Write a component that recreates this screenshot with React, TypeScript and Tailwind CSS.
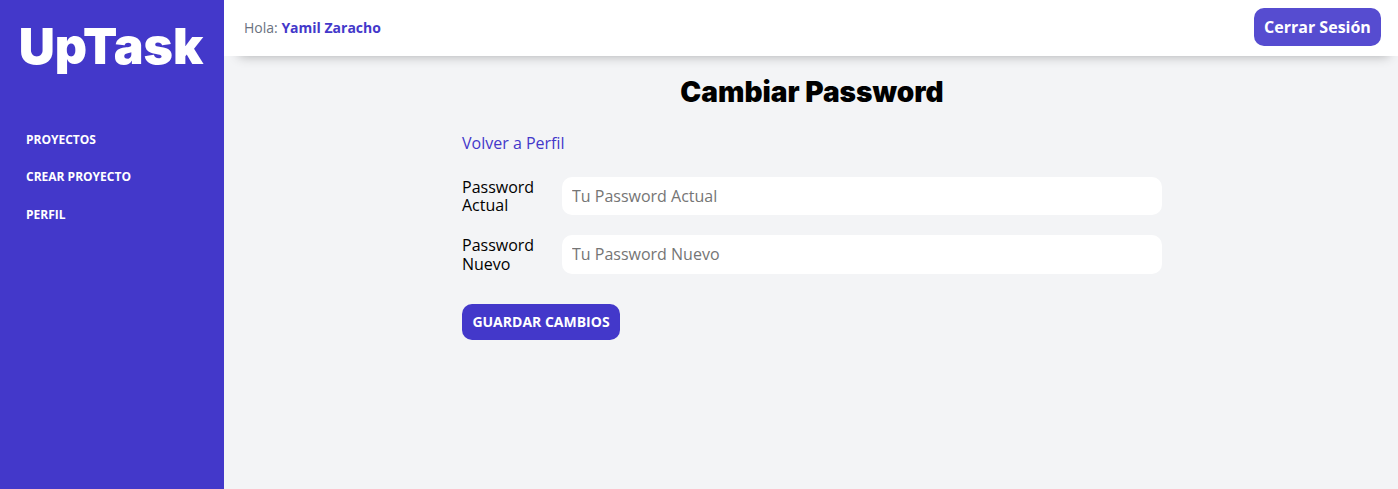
export default function App() {
  return (
    <div className="flex h-[489px] overflow-hidden bg-[#f3f4f6] font-['Open_Sans',sans-serif] text-black">
      <aside className="w-[224px] shrink-0 bg-[#4338ca] text-white">
        <h1 className="mt-[14px] pr-[2px] text-center font-['Inter',sans-serif] text-[50px] leading-[64px] font-black">UpTask</h1>
        <nav className="mt-[43px] flex flex-col pl-[26px] text-[12px] font-bold uppercase">
          <a className="h-[37px] leading-[37.5px]">Proyectos</a>
          <a className="h-[38px] leading-[37.5px]">Crear Proyecto</a>
          <a className="h-[38px] leading-[37.5px]">Perfil</a>
        </nav>
      </aside>
      <div className="flex-1">
        <header className="flex h-[56px] items-center justify-between bg-white pr-[17px] pb-[2px] pl-[20px] shadow-[3px_12px_12px_-12px_rgba(0,0,0,0.3)]">
          <p className="text-[14px] text-[#6b7280]">Hola: <span className="font-bold text-[#4338ca]">Yamil Zaracho</span></p>
          <button className="h-[38px] w-[127px] rounded-[10px] bg-[#564cd0] text-[16px] font-bold text-white">Cerrar Sesión</button>
        </header>
        <main className="pl-[2px]">
          <h2 className="mt-[20px] text-center font-['Inter',sans-serif] text-[28px] leading-[32px] font-black">Cambiar Password</h2>
          <div className="mx-auto flex w-[700px] flex-col items-start">
            <a className="mt-[25px] text-[16px] leading-[20px] text-[#4338ca]">Volver a Perfil</a>
            <form className="mt-[24px] w-full">
              <div className="flex h-[38px] items-center">
                <label className="w-[100px] shrink-0 pr-5 text-[16px] leading-[18.4px]">Password Actual</label>
                <input className="h-[38px] flex-1 rounded-[10px] bg-white px-[10px] text-[16px] placeholder:text-[#757575]" placeholder="Tu Password Actual" />
              </div>
              <div className="mt-[20px] flex h-[39px] items-center">
                <label className="w-[100px] shrink-0 pr-5 text-[16px] leading-[19px]">Password Nuevo</label>
                <input className="h-[39px] flex-1 rounded-[10px] bg-white px-[10px] pb-[1px] text-[16px] placeholder:text-[#757575]" placeholder="Tu Password Nuevo" />
              </div>
              <button className="mt-[30px] h-[36px] w-[158px] rounded-[10px] bg-[#4338ca] pb-[2px] text-[14px] font-bold text-white uppercase">Guardar Cambios</button>
            </form>
          </div>
        </main>
      </div>
    </div>
  );
}
